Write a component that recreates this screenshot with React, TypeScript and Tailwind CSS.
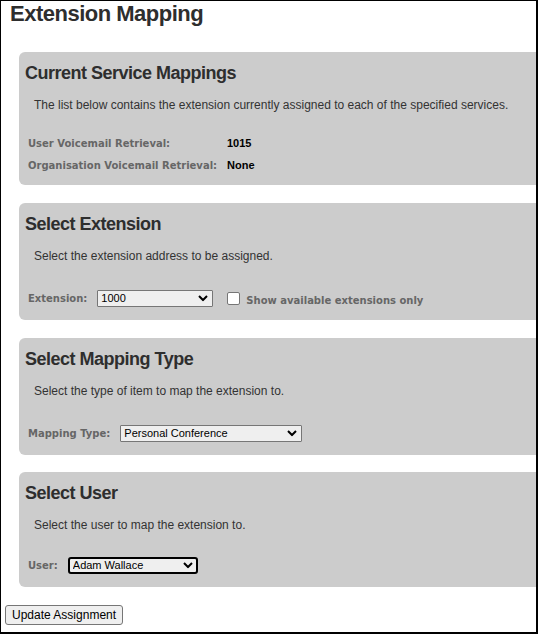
import { ReactNode } from 'react';

const arial = "font-['Liberation_Sans',Arial,sans-serif]";
const verdana = "font-['DejaVu_Sans',Verdana,sans-serif]";

const Chevron = () => (
  <svg
    className="pointer-events-none absolute right-[5px] top-1/2 -translate-y-1/2"
    width="10"
    height="7"
    viewBox="0 0 10 7"
  >
    <path d="M1 1.5 L5 5.5 L9 1.5" fill="none" stroke="#000" strokeWidth="2" />
  </svg>
);

const Select = ({ value, width, focused }: { value: string; width: string; focused?: boolean }) => (
  <div className={`relative ${width}`}>
    <select
      defaultValue={value}
      className={`block h-[17px] w-full appearance-none bg-[#efefef] pl-[3px] text-[11px] leading-[13px] text-black outline-none ${arial} ${
        focused ? 'rounded-[3px] border-2 border-black' : 'rounded-[1px] border border-[#767676]'
      }`}
    >
      <option>{value}</option>
    </select>
    <Chevron />
  </div>
);

const Label = ({ children }: { children: ReactNode }) => (
  <span className={`text-[10px] font-bold text-[#666666] ${verdana}`}>{children}</span>
);

const Panel = ({ title, text, children, rowGap }: { title: string; text: string; children: ReactNode; rowGap: string }) => (
  <section className="ml-[18px] -mr-4 rounded-[6px] bg-[#cccccc] pl-[6px] pt-[10px]">
    <h2 className={`text-[18px] font-bold leading-[22px] tracking-[-0.5px] text-[#2e2e2e] ${arial}`}>{title}</h2>
    <p className={`mt-[13px] pl-[9px] text-[12px] leading-[16px] text-[#333333] ${arial}`}>{text}</p>
    <div className={`${rowGap} pl-[3px]`}>{children}</div>
  </section>
);

export default function App() {
  return (
    <div className="h-[634px] w-[538px] overflow-hidden border-b-2 border-l border-r-2 border-t border-black bg-white">
      <h1 className={`pl-[9px] text-[22px] font-bold leading-[26px] tracking-[-0.5px] text-[#2e2e2e] ${arial}`}>
        Extension Mapping
      </h1>

      <div className="mt-[25px]">
        <Panel
          title="Current Service Mappings"
          text="The list below contains the extension currently assigned to each of the specified services."
          rowGap="mt-[19px] pb-[9px]"
        >
          <div className="grid grid-cols-[199px_1fr]">
            <div className="flex h-[22px] items-center">
              <Label>User Voicemail Retrieval:</Label>
            </div>
            <div className={`flex h-[22px] items-center text-[11px] font-bold text-black ${arial}`}>1015</div>
            <div className="flex h-[22px] items-center">
              <Label>Organisation Voicemail Retrieval:</Label>
            </div>
            <div className={`flex h-[22px] items-center text-[11px] font-bold text-black ${arial}`}>None</div>
          </div>
        </Panel>
      </div>

      <div className="mt-[18px]">
        <Panel
          title="Select Extension"
          text="Select the extension address to be assigned."
          rowGap="mt-[24px] pb-[12px]"
        >
          <div className="flex h-[20px] items-center">
            <Label>Extension:</Label>
            <div className="ml-[10px]">
              <Select value="1000" width="w-[116px]" />
            </div>
            <input
              type="checkbox"
              className="ml-[14px] h-[13px] w-[13px] appearance-none rounded-[2px] border border-[#767676] bg-white"
            />
            <span className="ml-[6px]">
              <Label>Show available extensions only</Label>
            </span>
          </div>
        </Panel>
      </div>

      <div className="mt-[18px]">
        <Panel
          title="Select Mapping Type"
          text="Select the type of item to map the extension to."
          rowGap="mt-[24px] pb-[12px]"
        >
          <div className="flex h-[20px] items-center">
            <Label>Mapping Type:</Label>
            <div className="ml-[10px]">
              <Select value="Personal Conference" width="w-[182px]" />
            </div>
          </div>
        </Panel>
      </div>

      <div className="mt-[17px]">
        <Panel
          title="Select User"
          text="Select the user to map the extension to."
          rowGap="mt-[22px] pb-[12px]"
        >
          <div className="flex h-[20px] items-center">
            <Label>User:</Label>
            <div className="ml-[10px]">
              <Select value="Adam Wallace" width="w-[130px]" focused />
            </div>
          </div>
        </Panel>
      </div>

      <button
        className={`ml-[4px] mt-[18px] h-[20px] rounded-[3px] border border-[#767676] bg-[#efefef] px-[6px] text-[12px] leading-[16px] text-black ${arial}`}
      >
        Update Assignment
      </button>
    </div>
  );
}
